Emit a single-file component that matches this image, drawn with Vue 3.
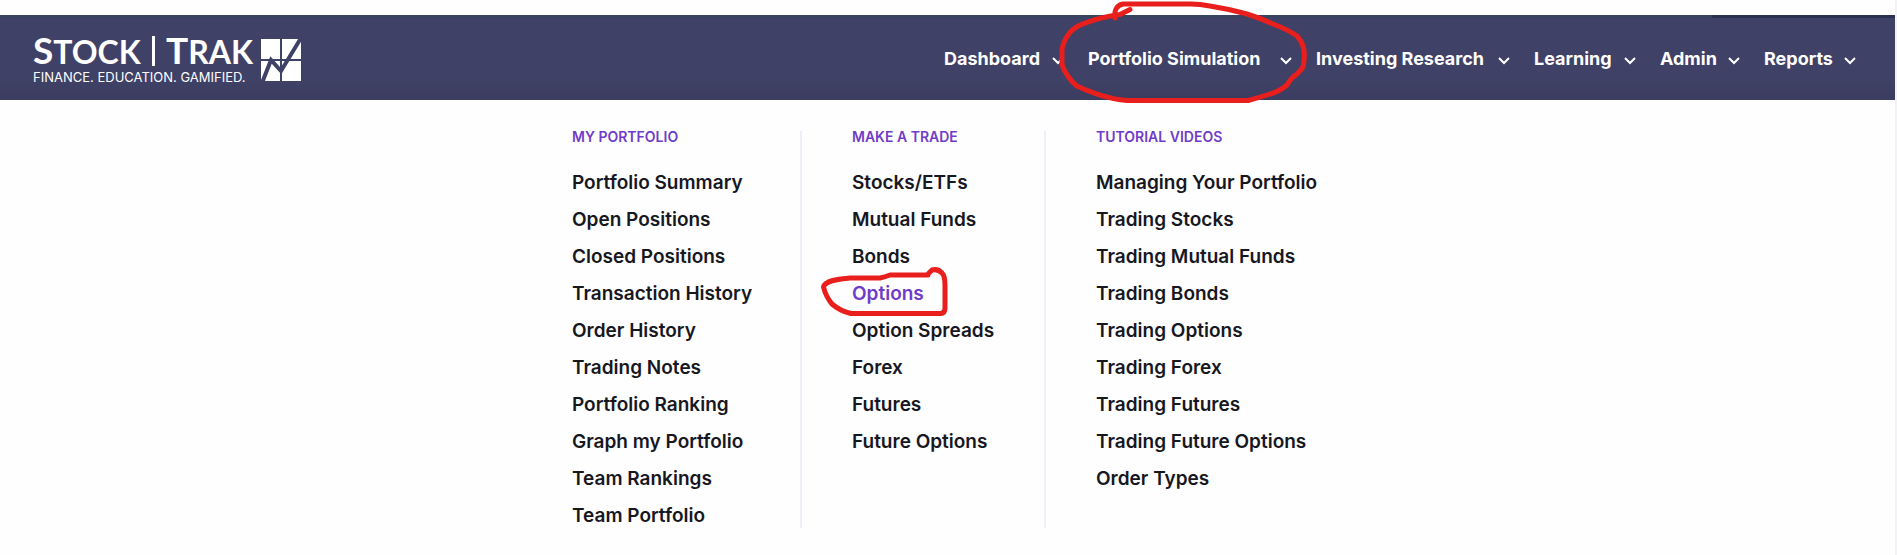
<script setup>
const nav = [
  { label: 'Dashboard' },
  { label: 'Portfolio Simulation', circled: true },
  { label: 'Investing Research' },
  { label: 'Learning' },
  { label: 'Admin' },
  { label: 'Reports' },
]

const menu = [
  {
    title: 'MY PORTFOLIO',
    links: [
      'Portfolio Summary', 'Open Positions', 'Closed Positions', 'Transaction History',
      'Order History', 'Trading Notes', 'Portfolio Ranking', 'Graph my Portfolio',
      'Team Rankings', 'Team Portfolio',
    ],
  },
  {
    title: 'MAKE A TRADE',
    links: [
      'Stocks/ETFs', 'Mutual Funds', 'Bonds', 'Options',
      'Option Spreads', 'Forex', 'Futures', 'Future Options',
    ],
  },
  {
    title: 'TUTORIAL VIDEOS',
    links: [
      'Managing Your Portfolio', 'Trading Stocks', 'Trading Mutual Funds', 'Trading Bonds',
      'Trading Options', 'Trading Forex', 'Trading Futures', 'Trading Future Options',
      'Order Types',
    ],
  },
]
const active = 'Options'
</script>

<template>
  <div class="page">
    <header class="bar">
      <div class="strip"><span></span></div>
      <div class="inner">
        <a class="logo" href="#">
          <span class="words">
            <span class="name">
              <span><b>S</b>TOCK</span><i class="pipe"></i><span><b>T</b>RAK</span>
            </span>
            <span class="tagline">FINANCE. EDUCATION. GAMIFIED.</span>
          </span>
          <svg class="mark" viewBox="0 0 40 42" width="40" height="42" aria-hidden="true">
            <path fill="#fff" d="M0 0H19V20H0ZM21 0H40V20H21ZM0 22H19V42H0ZM21 22H40V42H21Z" />
            <path fill="none" stroke="#3f4166" stroke-width="4" d="M1 44L10 21L20 32L40 -1" />
          </svg>
        </a>
        <nav>
          <ul class="nav">
            <li v-for="n in nav" :key="n.label">
              <button type="button">
                {{ n.label }}
                <svg class="chev" viewBox="0 0 12 8" width="12" height="8" aria-hidden="true">
                  <path d="M1 1L6 6L11 1" />
                </svg>
              </button>
              <svg v-if="n.circled" class="pen pen-nav" viewBox="0 0 252 106" width="252" height="106" aria-hidden="true">
                <path d="M72 9.5L62 14.5C48 16 35 20 22 25Q14 29 10 35Q5 42 4 50V65Q9 78 19 86C29 91 50 99 69 100.500H190Q200 98 212 94Q222 91 229 85Q231 81 235 77Q240 74 245 67Q247 59 246 50Q245 43 239 36C232 31 223 27 215 24Q202 18 189 14Q171 9 152 6Q140 3.500 129 4H65Q60 5 58 9Q56 13 57 18" />
              </svg>
            </li>
          </ul>
        </nav>
      </div>
    </header>

    <main class="panel">
      <section v-for="col in menu" :key="col.title" class="col">
        <h2>{{ col.title }}</h2>
        <ul>
          <li v-for="l in col.links" :key="l">
            <a href="#" :class="{ active: l === active }">{{ l }}</a>
            <svg v-if="l === active" class="pen pen-link" viewBox="0 0 130 54" width="130" height="54" aria-hidden="true">
              <path d="M108 10H70Q65 12 60 13H30C20 14 5 15 3.500 22Q6 32 12 39Q20 46 31 48.500H121Q125 48 125 43V20Q125 11 122 8Q118 3.500 112 5L108 9" />
            </svg>
          </li>
        </ul>
      </section>
    </main>
  </div>
</template>

<style>
html { background: #fefefe; }
</style>

<style scoped>
.page {
  box-sizing: border-box;
  min-height: 100vh;
  padding-top: 15px;
  overflow: hidden;
  border-right: 2px solid #f3f3f5;
  font-family: Inter, "Open Sans", sans-serif;
  color: #17171f;
}
ul { list-style: none; margin: 0; padding: 0; }
a { text-decoration: none; color: inherit; }

.bar { background: linear-gradient(#3f4166 75%, #3b3c60); }
.strip { display: flex; justify-content: flex-end; height: 3px; background: #38435f; }
.strip span { width: 183px; background: #2b324f; }
.inner {
  display: flex;
  justify-content: space-between;
  height: 82px;
  padding: 0 39px 0 33px;
}

.logo { display: flex; align-items: center; gap: 8px; padding-bottom: 2px; color: #fff; }
.words { display: flex; flex-direction: column; gap: 1px; width: 220px; }
.name {
  display: flex;
  align-items: baseline;
  justify-content: space-between;
  font: 700 32px/34px Lato, sans-serif;
}
.name b { font-size: 37px; font-weight: 700; }
.pipe { align-self: center; width: 3px; height: 30px; background: #fff; }
.tagline { font-size: 13px; line-height: 14px; white-space: nowrap; }
.mark { display: block; margin-top: 4px; }

.nav {
  display: grid;
  grid-template-columns: 120px 204px 194px 102px 80px 92px;
  gap: 24px;
  height: 100%;
}
.nav li { position: relative; display: flex; }
.nav button {
  display: flex;
  align-items: center;
  justify-content: space-between;
  width: 100%;
  padding: 0;
  border: 0;
  background: none;
  color: #fff;
  font: 700 18px/24px Inter, sans-serif;
  white-space: nowrap;
}
.chev { flex: none; margin-top: 3px; }
.chev path { fill: none; stroke: #fff; stroke-width: 2; }

.pen { position: absolute; z-index: 2; overflow: visible; pointer-events: none; }
.pen path { fill: none; stroke: #e81f1d; stroke-width: 5; stroke-linecap: round; stroke-linejoin: round; }
.pen-nav { left: -30px; top: -18px; }
.pen-link { left: -32px; top: -16px; }

.panel {
  display: grid;
  grid-template-columns: 230px 244px 277px;
  justify-content: center;
  padding: 31px 0 27px;
}
.col + .col { padding-left: 50px; }
.col:not(:last-child) { border-right: 2px solid #edf0fc; }
h2 { margin: 0 0 27px; font-size: 14px; line-height: 12px; font-weight: 600; color: #6f3cc9; }
.col ul { display: grid; gap: 12px; }
.col li { position: relative; height: 25px; font-size: 19px; line-height: 25px; font-weight: 600; white-space: nowrap; }
.active { color: #6f3cc9; }
</style>
